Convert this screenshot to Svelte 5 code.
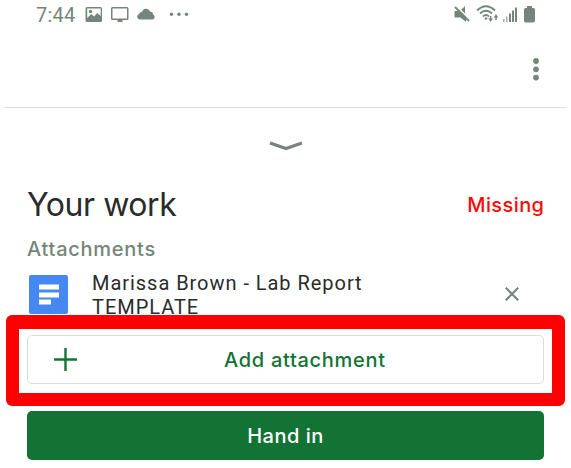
<script>
  const fileName = 'Marissa Brown - Lab Report TEMPLATE';
</script>

<main>
  <header class="status">
    <span class="clock">7:44</span>
    <svg class="left-icons" width="108" height="30" viewBox="83 0 108 30" fill="#76857b">
      <path fill-rule="evenodd" d="M87 7h13.500q1.500 0 1.500 1.500v12q0 1.500-1.500 1.500H87q-1.500 0-1.500-1.500v-12Q85.500 7 87 7zm.2 1.500V18l4-4 3 2.500 3-3.500 3.500 3V8.500z" />
      <circle cx="90.500" cy="11.500" r="1.700" />
      <path fill-rule="evenodd" d="M112.500 7h14.500q1.500 0 1.500 1.500v10q0 1.500-1.500 1.500h-4.500v2h-5v-2h-5q-1.500 0-1.500-1.500v-10q0-1.500 1.500-1.500zm0 1.500v10H127v-10z" />
      <path d="M140 19.500c-3 0-4-4-1-5.200.5-2 2-2.400 3-2.300 1-4 6.500-4.500 8.200-.3 2.300-.3 3 1.300 2.800 2.700 2.500 1 2 5-1 5.100z" />
      <circle cx="171.500" cy="14.300" r="1.700" /><circle cx="179" cy="14.300" r="1.700" /><circle cx="186.500" cy="14.300" r="1.700" />
    </svg>
    <svg class="right-icons" width="88" height="30" viewBox="450 0 88 30" fill="#76857b">
      <path d="M454.500 11h4.500l7 7v4l-5.500-4.500h-6zM461 10l4-4v9z" />
      <path d="M456.500 6l14 14" stroke="#fff" stroke-width="1.200" />
      <path d="M455 7l14 14" stroke="#76857b" stroke-width="2" />
      <g fill="none" stroke="#76857b" stroke-width="1.800"><path d="M477 10.500q9-8.500 18 0M480 13.500q6-5.500 12 0M483 16.500q3-3 6 0" /></g>
      <circle cx="486" cy="18.500" r="1.300" />
      <path d="M488.300 18.500h1.500V16h1.600v2.500h1.500l-2.300 3.500zM493.700 17.500L496 14l2.300 3.500h-1.500V20h-1.600v-2.500z" />
      <path d="M503 19h1.500v3H503zM506 16.500h1.500V22H506z" opacity=".65" />
      <path d="M509 13.500h2V22h-2zM512 10.500h2V22h-2zM515 7.500h2V22h-2z" />
      <path d="M527 6h5v2h1.500q1.500 0 1.500 1.500v11q0 2-2 2h-7q-2 0-2-2v-11q0-1.500 1.500-1.500h1.500z" />
    </svg>
  </header>
  <div class="toolbar">
    <svg width="8" height="24" viewBox="0 0 8 24" fill="#76857b"><circle cx="4" cy="3" r="2.900" /><circle cx="4" cy="11.300" r="2.900" /><circle cx="4" cy="19.600" r="2.900" /></svg>
  </div>
  <div class="handle"><svg width="34" height="12" viewBox="0 0 34 12"><path d="M1 3l16 5.500L33 3" fill="none" stroke="#76857b" stroke-width="3.200" /></svg></div>
  <div class="heading"><h1>Your work</h1><span class="missing">Missing</span></div>
  <h2><span>Attachments</span></h2>
  <div class="file">
    <svg class="doc" width="39" height="39" viewBox="0 0 39 39"><rect width="39" height="39" rx="2" fill="#4688f1" /><path d="M10 9.500h20v5H10zM10 17.500h20v5H10zM10 24.500h12v5H10z" fill="#fff" /></svg>
    <p>{fileName}</p>
    <svg class="close" width="14" height="14" viewBox="0 0 14 14"><path d="M.8.8l12.400 12.400M13.200.8L.8 13.200" stroke="#76857b" stroke-width="2" /></svg>
  </div>
  <div class="highlight">
    <button class="add">
      <svg width="23" height="23" viewBox="0 0 23 23"><path d="M11.500 0v23M0 11.500h23" stroke="#127334" stroke-width="2.400" /></svg>
      <span>Add attachment</span>
    </button>
  </div>
  <button class="hand"><span>Hand in</span></button>
</main>

<style>
  :global(body) { background: #fff; }
  main { width: 571px; height: 468px; display: flex; flex-direction: column; overflow: hidden; background: #fff; font-family: Inter, "Open Sans", sans-serif; }
  .status { height: 30px; flex: none; display: flex; padding: 0 33px 0 36px; }
  .clock { width: 47px; font: 20px/31px Roboto, sans-serif; letter-spacing: .2px; color: #76857b; }
  .right-icons { margin-left: auto; }
  .toolbar { height: 49px; flex: none; margin: 0 5px; border-bottom: 1px solid #d9dadb; display: flex; justify-content: flex-end; padding: 28px 26px 0 0; }
  .handle { height: 76px; flex: none; display: flex; justify-content: center; padding-top: 32px; box-sizing: border-box; }
  .handle svg { display: block; }
  .heading { height: 48px; flex: none; display: flex; justify-content: space-between; padding: 0 27px; }
  h1 { margin: 0; font: 400 32px/42px Inter, sans-serif; letter-spacing: -.45px; color: #282c2a; white-space: nowrap; }
  .missing { font: 500 20px/42px Inter, sans-serif; letter-spacing: .4px; margin-right: -.4px; color: #fa0a0a; }
  h2 { height: 40px; flex: none; margin: 0; padding: 0 27px; font: 500 20px/34px Inter, sans-serif; letter-spacing: .75px; color: #76857b; }
  .file { height: 43px; flex: none; display: flex; padding: 0 52px 0 29px; }
  .doc { margin-top: 3px; flex: none; }
  p { width: 300px; margin: -1px 0 0 24px; font: 20px/24px Roboto, sans-serif; letter-spacing: .96px; color: #282c2a; }
  .close { margin: 15px 0 0 auto; }
  .highlight { height: 91px; flex: none; margin: 0 6px; border: solid #f00; border-width: 14px 13px 13px; border-radius: 6px; padding: 6px 8px 9px; box-sizing: border-box; }
  button { font: 500 20px/1 Inter, sans-serif; width: 517px; height: 49px; border-radius: 5px; box-sizing: border-box; padding: 0; display: flex; align-items: center; }
  .add { background: #fff; border: 1px solid #dadcdb; color: #127334; padding-left: 26px; letter-spacing: .7px; }
  .add span { margin-left: 147px; }
  .hand { flex: none; margin: 5px 0 0 27px; color: #fff; background: #127334; border: 0; justify-content: center; letter-spacing: .5px; }
</style>
